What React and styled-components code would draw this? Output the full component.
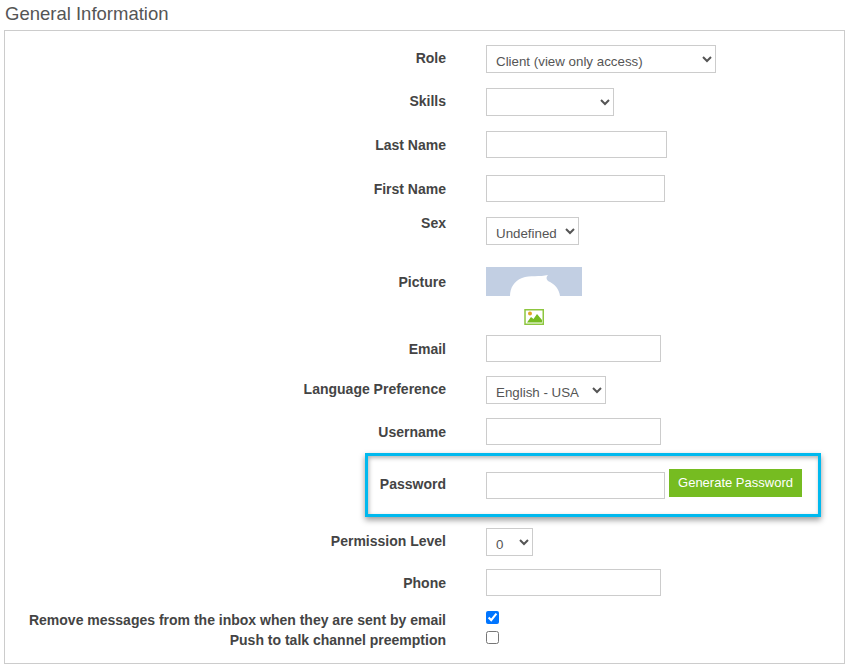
import React from 'react'
import styled, { createGlobalStyle } from 'styled-components'

const GlobalStyle = createGlobalStyle`
  html, body {
    margin: 0;
    background: #fff;
    font-family: "Liberation Sans", Arial, sans-serif;
  }
`

const Page = styled.div`
  width: 851px;
  height: 670px;
  overflow: hidden;
`

const Title = styled.h2`
  margin: 0;
  height: 30px;
  padding-left: 5px;
  font-size: 18.5px;
  font-weight: 400;
  line-height: 28px;
  color: #555;
`

const Panel = styled.div`
  box-sizing: border-box;
  width: 841px;
  height: 634px;
  margin-left: 4px;
  padding-top: 14px;
  border: 1px solid #ccc;
`

const Row = styled.div`
  display: grid;
  grid-template-columns: 441px 1fr;
  column-gap: 40px;
  align-items: start;
  height: ${p => p.$h}px;
`

const Label = styled.label`
  display: block;
  margin-top: ${p => p.$top || 0}px;
  font-size: 14px;
  font-weight: 700;
  line-height: 16px;
  text-align: right;
  white-space: nowrap;
  color: #444;
`

const Cell = styled.div`
  display: flex;
  align-items: flex-start;
  margin-top: ${p => p.$top || 0}px;
`

const Select = styled.select`
  box-sizing: border-box;
  width: ${p => p.$w}px;
  height: 28px;
  padding: 5px 0 0 5px;
  border: 1px solid #ccc;
  border-radius: 0;
  background: #fff;
  font-family: inherit;
  font-size: 13.33px;
  color: #555;
`

const Input = styled.input`
  box-sizing: border-box;
  display: block;
  width: ${p => p.$w}px;
  height: 27px;
  padding: 0 8px;
  border: 1px solid #ccc;
  border-radius: 0;
  background: #fff;
`

const Avatar = styled.svg`
  display: block;
  width: 96px;
  height: 29px;
`

const PictureIcon = styled.svg`
  display: block;
  width: 20px;
  height: 16px;
  margin-left: 38px;
`

const Highlight = styled.div`
  box-sizing: border-box;
  display: grid;
  grid-template-columns: 78px 1fr;
  column-gap: 40px;
  align-items: start;
  width: 456px;
  height: 64px;
  margin: 0 0 11px 360px;
  border: 3px solid #00b9ee;
  box-shadow: 0 3px 6px rgba(0, 0, 0, 0.4), inset 1px 2px 4px rgba(0, 0, 0, 0.3);
`

const GenerateButton = styled.button`
  box-sizing: border-box;
  width: 133px;
  height: 28px;
  margin: -3px 0 0 4px;
  padding: 0 0 2px;
  border: 0;
  background: #76bc21;
  font-family: inherit;
  font-size: 13px;
  color: #fff;
`

const Check = styled.input.attrs({ type: 'checkbox' })`
  display: block;
  width: 13px;
  height: 13px;
  margin: 0;
`

const noop = () => {}

export default function App() {
  return (
    <Page>
      <GlobalStyle />
      <Title>General Information</Title>
      <Panel>
        <Row $h={43}>
          <Label $top={5}>Role</Label>
          <Select $w={230} value="client" onChange={noop}>
            <option value="client">Client (view only access)</option>
          </Select>
        </Row>
        <Row $h={43}>
          <Label $top={5}>Skills</Label>
          <Select $w={128} value="" onChange={noop}>
            <option value=""></option>
          </Select>
        </Row>
        <Row $h={44}>
          <Label $top={6}>Last Name</Label>
          <Input $w={181} />
        </Row>
        <Row $h={40}>
          <Label $top={6}>First Name</Label>
          <Input $w={179} />
        </Row>
        <Row $h={52}>
          <Label>Sex</Label>
          <Cell $top={2}>
            <Select $w={93} value="undefined" onChange={noop}>
              <option value="undefined">Undefined</option>
            </Select>
          </Cell>
        </Row>
        <Row $h={42}>
          <Label $top={7}>Picture</Label>
          <Avatar viewBox="0 0 96 29">
            <rect width="96" height="29" fill="#c2cfe3" />
            <path d="M24 29 C24 21 28 14 36 11 C44 8 54 10 62 8 C60 10 60 12 62 14 C69 17 73 22 74 29 Z" fill="#fff" />
          </Avatar>
        </Row>
        <Row $h={26}>
          <span />
          <PictureIcon viewBox="0 0 20 16">
            <rect x="1" y="0.75" width="18.25" height="14.5" fill="#fff" stroke="#8dc63f" strokeWidth="1.5" />
            <circle cx="6" cy="4.5" r="2" fill="#e0a526" />
            <path d="M3 13.5 L7 8 L9.5 10 L13 5 L18 11 V13.5 Z" fill="#76bc21" />
          </PictureIcon>
        </Row>
        <Row $h={41}>
          <Label $top={6}>Email</Label>
          <Input $w={175} />
        </Row>
        <Row $h={42}>
          <Label $top={5}>Language Preference</Label>
          <Select $w={120} value="en" onChange={noop}>
            <option value="en">English - USA</option>
          </Select>
        </Row>
        <Row $h={35}>
          <Label $top={6}>Username</Label>
          <Input $w={175} />
        </Row>
        <Highlight>
          <Label $top={20}>Password</Label>
          <Cell $top={16}>
            <Input $w={179} />
            <GenerateButton type="button">Generate Password</GenerateButton>
          </Cell>
        </Highlight>
        <Row $h={41}>
          <Label $top={5}>Permission Level</Label>
          <Select $w={47} value="0" onChange={noop}>
            <option value="0">0</option>
          </Select>
        </Row>
        <Row $h={42}>
          <Label $top={6}>Phone</Label>
          <Input $w={175} />
        </Row>
        <Row $h={20}>
          <Label $top={1}>Remove messages from the inbox when they are sent by email</Label>
          <Check defaultChecked />
        </Row>
        <Row $h={20}>
          <Label $top={1}>Push to talk channel preemption</Label>
          <Check />
        </Row>
      </Panel>
    </Page>
  )
}
